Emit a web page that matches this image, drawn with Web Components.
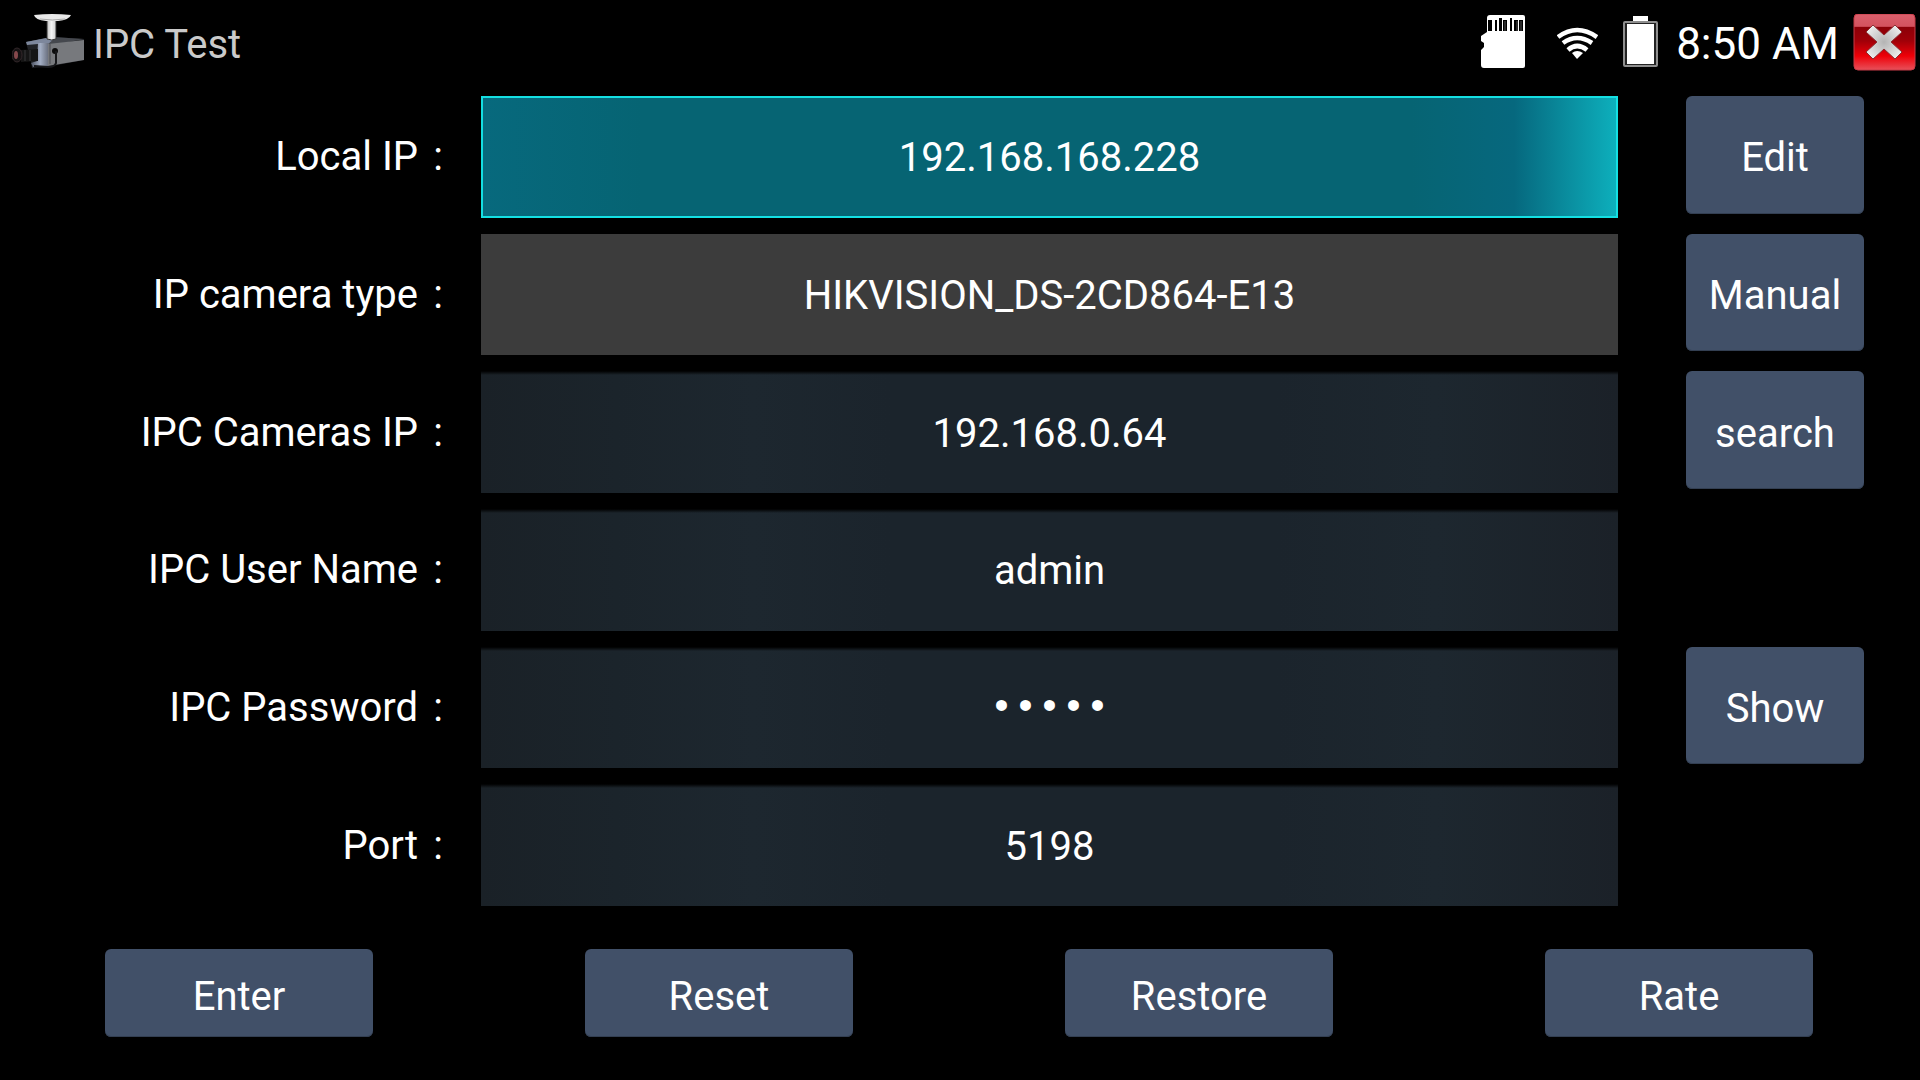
<!DOCTYPE html>
<html lang="en">
<head>
<meta charset="utf-8">
<title>IPC Test</title>
<style>
    body {
        margin: 0;
        background: #000;
        color: #fff;
        font-family: Roboto, sans-serif;
        font-size: 40px;
    }
</style>
</head>
<body>
<ipc-app>
    <ipc-titlebar slot="header" time="8:50 AM">IPC Test</ipc-titlebar>

    <ipc-field label="Local IP" value="192.168.168.228" variant="focused">
        <ipc-button>Edit</ipc-button>
    </ipc-field>
    <ipc-field label="IP camera type" value="HIKVISION_DS-2CD864-E13" variant="plain">
        <ipc-button>Manual</ipc-button>
    </ipc-field>
    <ipc-field label="IPC Cameras IP" value="192.168.0.64">
        <ipc-button>search</ipc-button>
    </ipc-field>
    <ipc-field label="IPC User Name" value="admin"></ipc-field>
    <ipc-field label="IPC Password" value="12345" type="password">
        <ipc-button>Show</ipc-button>
    </ipc-field>
    <ipc-field label="Port" value="5198"></ipc-field>

    <ipc-button slot="actions">Enter</ipc-button>
    <ipc-button slot="actions">Reset</ipc-button>
    <ipc-button slot="actions">Restore</ipc-button>
    <ipc-button slot="actions">Rate</ipc-button>
</ipc-app>

<script>
const appTemplate = document.createElement('template');
appTemplate.innerHTML = `
    <style>
        :host {
            display: flex;
            flex-direction: column;
            min-height: 100vh;
        }

        main {
            flex: 1;
            display: grid;
            grid-auto-rows: minmax(72px, 1fr);
            gap: 16px;
        }

        footer {
            display: grid;
            grid-template-columns: repeat(4, 1fr);
            padding: 43px 0;
        }

        footer ::slotted(ipc-button) {
            width: 268px;
            height: 88px;
            margin-right: 2px;
            justify-self: center;
        }
    </style>

    <slot name="header"></slot>
    <main><slot></slot></main>
    <footer><slot name="actions"></slot></footer>
`;

class IpcApp extends HTMLElement {
    constructor() {
        super();
        this.attachShadow({ mode: 'open' });
        this.shadowRoot.appendChild(appTemplate.content.cloneNode(true));
    }
}

const titlebarTemplate = document.createElement('template');
titlebarTemplate.innerHTML = `
    <style>
        :host {
            display: flex;
            align-items: center;
            justify-content: space-between;
            box-sizing: border-box;
            height: 96px;
            padding: 0 4px 12px 12px;
        }

        .brand, .status {
            display: flex;
            align-items: center;
        }

        svg {
            display: block;
            flex: none;
        }

        h1 {
            margin: 0 0 0 7px;
            padding-top: 4px;
            color: #cacaca;
            font-size: 40px;
            font-weight: 400;
        }

        .wifi { margin-left: 31px; }
        .battery { margin-left: 25px; }

        time {
            margin: 0 14px 0 18px;
            padding-top: 4px;
            font-size: 44px;
        }

        button {
            padding: 0;
            border: 0;
            background: none;
            cursor: pointer;
        }
    </style>

    <div class="brand">
        <svg width="74" height="56" viewBox="0 0 74 56" aria-hidden="true">
            <defs>
                <linearGradient id="stem" x1="0" x2="1" y1="0" y2="0">
                    <stop offset="0" stop-color="#c4c4c4"/>
                    <stop offset=".5" stop-color="#f4f4f4"/>
                    <stop offset="1" stop-color="#d0d0d0"/>
                </linearGradient>
                <linearGradient id="front" x1="0" x2="1" y1="0" y2="0">
                    <stop offset="0" stop-color="#4d5361"/>
                    <stop offset=".55" stop-color="#a3aec4"/>
                    <stop offset="1" stop-color="#6b7180"/>
                </linearGradient>
            </defs>
            <path d="M14 28l28-5 30 2v21l-32 6-20 2-1-6z" fill="#202226"/>
            <path d="M14 28l27-5 31 2-31 6z" fill="#45484e"/>
            <path d="M36 30l36-4v20l-36 6z" fill="#77797d"/>
            <path d="M14 28l20-4 8 1-6 5-5 3-5-3-11 1z" fill="#7d879c"/>
            <path d="M26 29l10 0v23l-15 1-2-4 6-2z" fill="url(#front)"/>
            <path d="M9 36l17-1v12l-17 1z" fill="#151515"/>
            <path d="M13 36v11M18 36v11" stroke="#39393b" stroke-width="1"/>
            <ellipse cx="5" cy="41" rx="5" ry="7" fill="#151213" stroke="#33272a" stroke-width="1"/>
            <ellipse cx="4" cy="41" rx="2" ry="4" fill="#85484c"/>
            <path d="M38 29v21" stroke="#4d4f54" stroke-width="1"/>
            <circle cx="43" cy="37" r="3" fill="#0b0b0c"/>
            <path d="M44 37v12q-1 4-8 4l-14-1" fill="none" stroke="#16171a" stroke-width="2"/>
            <path d="M35 5h9v20q-4 2-9 0z" fill="url(#stem)" stroke="#333" stroke-width="1"/>
            <path d="M22 1q18-2 37 0-2 5-13 6H34q-11-1-12-6z" fill="#e9e9e9"/>
            <path d="M28 5q12 2 25 0" fill="none" stroke="#a9a9a9" stroke-width="1"/>
        </svg>
        <h1><slot></slot></h1>
    </div>

    <div class="status">
        <svg width="45" height="54" viewBox="0 0 45 54" role="img" aria-label="SD card">
            <path d="M9 0h33q2 0 2 2v49q0 2-2 2H3q-3 0-3-3V35l3-3v-4l-3-2v-5l6-4V3q0-3 3-3z" fill="#fff"/>
            <path d="M7 5h4v11H7zM14 5h2v11h-2zM18 3h3v13h-3zM22 5h4v11h-4zM29 3h2v13h-2zM33 5h4v11h-4zM38 5h4v11h-4z" fill="#000"/>
            <path d="M24 6v10M36 6v10M40 6v10" stroke="#555" stroke-width="1"/>
        </svg>
        <svg class="wifi" width="41" height="35" viewBox="0 -3 41 35" role="img" aria-label="Wi-Fi">
            <g fill="none" stroke="#fff" stroke-width="4.6">
                <path d="M1 9Q20-5 40 9"/>
                <path d="M6 15Q20 5 35 15"/>
                <path d="M11 22Q20 14 30 22"/>
            </g>
            <path d="M15 25Q20 21 26 25L20 31z" fill="#fff"/>
        </svg>
        <svg class="battery" width="35" height="52" viewBox="0 0 35 52" role="img" aria-label="Battery full">
            <path d="M10 0h15v5H10z" fill="#fff"/>
            <rect x="1" y="6" width="33" height="44" rx="1" fill="#222" stroke="#8f8f8f" stroke-width="2"/>
            <path d="M4 8h27v40H4z" fill="#fff"/>
        </svg>
        <time></time>
        <button type="button" aria-label="Close">
            <svg width="63" height="57" viewBox="0 0 63 57" aria-hidden="true">
                <defs>
                    <linearGradient id="red" x1="0" x2="0" y1="0" y2="1">
                        <stop offset="0" stop-color="#d9606c"/>
                        <stop offset=".22" stop-color="#d4525f"/>
                        <stop offset=".24" stop-color="#8c0008"/>
                        <stop offset=".48" stop-color="#a00008"/>
                        <stop offset=".75" stop-color="#ee0008"/>
                        <stop offset="1" stop-color="#e8505a"/>
                    </linearGradient>
                    <radialGradient id="cross" gradientUnits="userSpaceOnUse" cx="31" cy="28" r="20">
                        <stop offset="0" stop-color="#b4b4b4"/>
                        <stop offset="1" stop-color="#ececec"/>
                    </radialGradient>
                </defs>
                <rect x="1" y="0" width="61" height="56" rx="4" fill="url(#red)" stroke="#c83a46" stroke-width="1"/>
                <path d="M20 11l11 10 11-10 7 7-11 10 11 10-7 7-11-10-11 10-7-7 11-10-11-10z" fill="url(#cross)" stroke="#8a3034" stroke-width="1"/>
            </svg>
        </button>
    </div>
`;

class IpcTitlebar extends HTMLElement {
    constructor() {
        super();
        this.attachShadow({ mode: 'open' });
        this.shadowRoot.appendChild(titlebarTemplate.content.cloneNode(true));
    }

    connectedCallback() {
        this.shadowRoot.querySelector('time').textContent = this.getAttribute('time');
    }
}

const fieldTemplate = document.createElement('template');
fieldTemplate.innerHTML = `
    <style>
        :host {
            display: grid;
            grid-template-columns: 458px minmax(0, 1fr) 178px;
            padding-right: 56px;
        }

        label {
            display: flex;
            align-items: center;
            justify-content: flex-end;
            white-space: nowrap;
        }

        .colon {
            width: 40px;
            text-align: center;
        }

        input {
            box-sizing: border-box;
            min-width: 0;
            margin: 0 68px 0 23px;
            padding: 2px 0 0;
            border: 0;
            border-radius: 0;
            outline: 0;
            background:
                linear-gradient(#000, transparent 4px),
                linear-gradient(90deg, #1a2127, #1b242b 12%, #1d272f 24%, #1b242c 36%, #1b242c 70%, #1d272f 84%, #1b2128);
            color: inherit;
            font: inherit;
            text-align: center;
        }

        :host([variant=focused]) input {
            border: 2px solid #14dfe2;
            background: linear-gradient(90deg, #07697d, #066473 14%, #066473 82%, #06687e 91%, #0dafbc);
        }

        :host([variant=plain]) input {
            background: #3c3c3c;
        }

        input[type=password] {
            font-family: "Liberation Mono", monospace;
        }

        ::slotted(ipc-button) {
            margin-bottom: 4px;
        }
    </style>

    <label for="value"><span class="text"></span><span class="colon">:</span></label>
    <input id="value">
    <slot></slot>
`;

class IpcField extends HTMLElement {
    constructor() {
        super();
        this.attachShadow({ mode: 'open' });
        this.shadowRoot.appendChild(fieldTemplate.content.cloneNode(true));
    }

    connectedCallback() {
        const input = this.shadowRoot.querySelector('input');
        this.shadowRoot.querySelector('.text').textContent = this.getAttribute('label');
        input.type = this.getAttribute('type') || 'text';
        input.value = this.getAttribute('value');
        input.readOnly = this.getAttribute('variant') === 'plain';
    }
}

const buttonTemplate = document.createElement('template');
buttonTemplate.innerHTML = `
    <style>
        :host {
            display: grid;
        }

        button {
            padding: 6px 0 0;
            border: 0;
            border-radius: 6px;
            background: #415068;
            box-shadow: inset 0 -1px #333f52;
            color: inherit;
            font: inherit;
            cursor: pointer;
        }
    </style>

    <button type="button"><slot></slot></button>
`;

class IpcButton extends HTMLElement {
    constructor() {
        super();
        this.attachShadow({ mode: 'open' });
        this.shadowRoot.appendChild(buttonTemplate.content.cloneNode(true));
    }
}

window.customElements.define('ipc-app', IpcApp);
window.customElements.define('ipc-titlebar', IpcTitlebar);
window.customElements.define('ipc-field', IpcField);
window.customElements.define('ipc-button', IpcButton);
</script>
</body>
</html>
